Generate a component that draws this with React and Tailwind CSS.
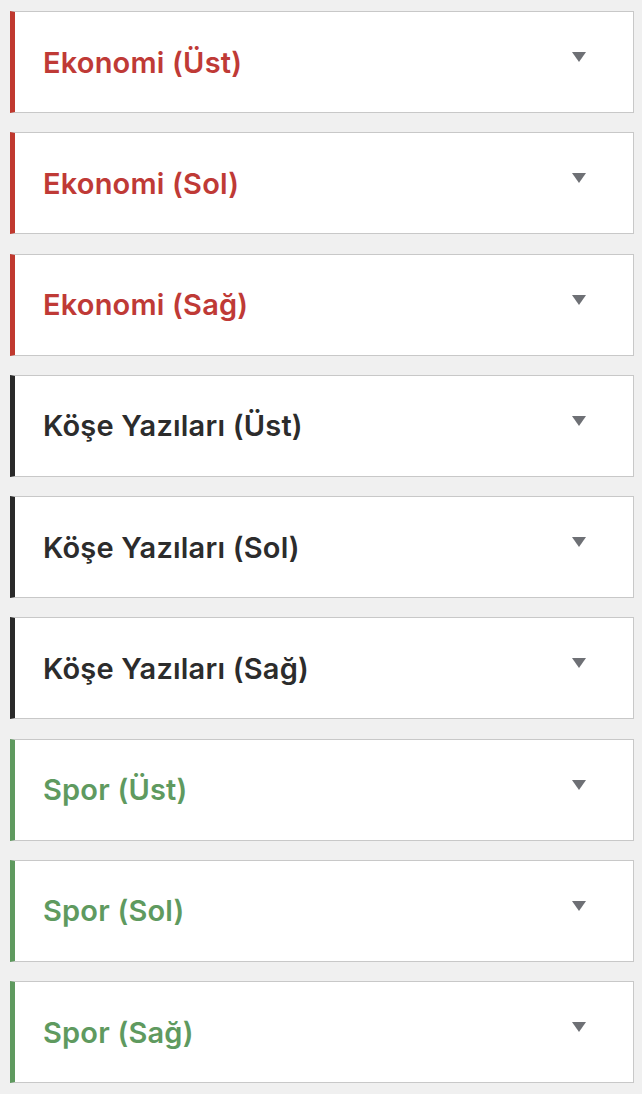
import React from "react";

const items = [
    { title: "Ekonomi (Üst)", tone: "red" },
    { title: "Ekonomi (Sol)", tone: "red" },
    { title: "Ekonomi (Sağ)", tone: "red" },
    { title: "Köşe Yazıları (Üst)", tone: "dark" },
    { title: "Köşe Yazıları (Sol)", tone: "dark" },
    { title: "Köşe Yazıları (Sağ)", tone: "dark" },
    { title: "Spor (Üst)", tone: "green" },
    { title: "Spor (Sol)", tone: "green" },
    { title: "Spor (Sağ)", tone: "green" },
];

const tones = {
    red: "border-l-[#c0392f] text-[#bf3a36]",
    dark: "border-l-[#2a2a2a] text-[#2c2c2c]",
    green: "border-l-[#5f9a5f] text-[#5f9a5f]",
};

const Panel = ({ title, tone }) => (
    <div className={`h-[102px] bg-white border border-[#c8c8c8] border-l-[5px] flex items-center justify-between pl-[28px] pr-[47px] ${tones[tone]}`}>
        <h3 className="text-[29px] font-semibold tracking-[0.2px] leading-none">{title}</h3>
        <svg width="14" height="10" viewBox="0 0 14 10" className="mb-[10px]">
            <polygon points="0,0 14,0 7,10" fill="#6e7075" />
        </svg>
    </div>
);

export default function App() {
    return (
        <div className="min-h-[1094px] bg-[#f0f0f0] pt-[11px] pl-[10px] pr-[8px] flex flex-col gap-[19.25px]" style={{ fontFamily: "Inter, 'Noto Sans', sans-serif" }}>
            {items.map((item) => (
                <Panel key={item.title} {...item} />
            ))}
        </div>
    );
}
